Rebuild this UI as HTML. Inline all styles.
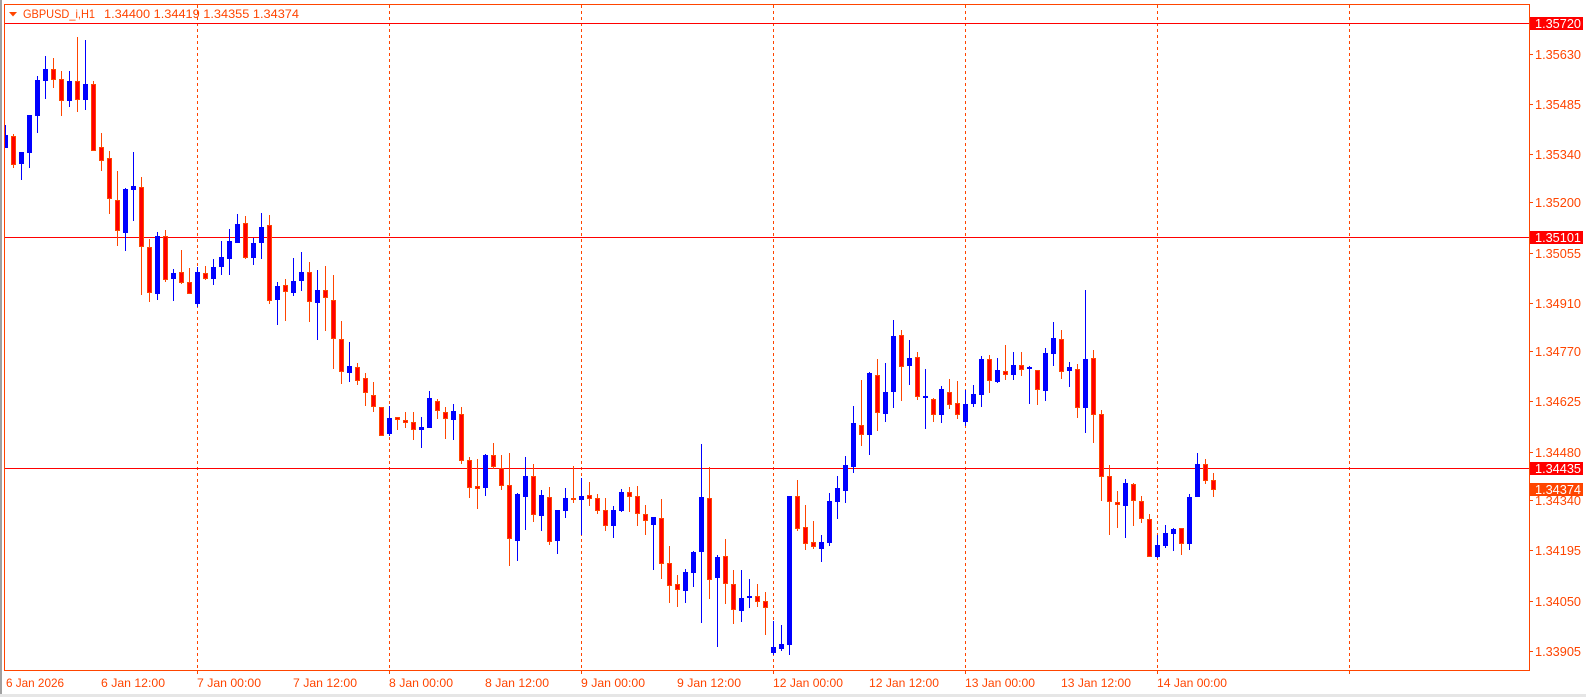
<!DOCTYPE html>
<html><head><meta charset="utf-8"><style>
html,body{margin:0;padding:0;background:#fff;width:1586px;height:697px;overflow:hidden}
svg{display:block}
text{font-family:"Liberation Sans",sans-serif}
</style></head><body>
<svg width="1586" height="697" viewBox="0 0 1586 697" xmlns="http://www.w3.org/2000/svg">
<rect x="0" y="0" width="2" height="697" fill="#a0a0a0"/>
<rect x="0" y="694" width="1586" height="3" fill="#e6e6e6"/>
<defs><clipPath id="pc"><rect x="5" y="5" width="1524" height="665"/></clipPath></defs>
<g stroke="#ff4500" stroke-width="1" stroke-dasharray="3,3">
<line x1="197.5" y1="5" x2="197.5" y2="676"/><line x1="389.5" y1="5" x2="389.5" y2="676"/>
<line x1="581.5" y1="5" x2="581.5" y2="676"/><line x1="773.5" y1="5" x2="773.5" y2="676"/>
<line x1="965.5" y1="5" x2="965.5" y2="676"/><line x1="1157.5" y1="5" x2="1157.5" y2="676"/>
<line x1="1349.5" y1="5" x2="1349.5" y2="676"/>
</g>
<g fill="#ff0000">
<rect x="4" y="23" width="1525" height="1"/>
<rect x="4" y="237" width="1525" height="1"/>
<rect x="4" y="468" width="1525" height="1"/>
</g>
<g clip-path="url(#pc)" id="c"></g>
<rect x="4.5" y="4.5" width="1525" height="666" fill="none" stroke="#ff4500" stroke-width="1"/>
<polygon points="9,12 17,12 13,16.5" fill="#ff4500"/>
<text x="23" y="18" font-size="12" fill="#ff4500" textLength="72" lengthAdjust="spacingAndGlyphs">GBPUSD_i,H1</text>
<text x="104" y="18" font-size="12" fill="#ff4500" textLength="195" lengthAdjust="spacingAndGlyphs">1.34400 1.34419 1.34355 1.34374</text>
<g fill="#ff4500">
<rect x="1529" y="54" width="4" height="1"/><rect x="1529" y="104" width="4" height="1"/>
<rect x="1529" y="154" width="4" height="1"/><rect x="1529" y="202" width="4" height="1"/>
<rect x="1529" y="253" width="4" height="1"/><rect x="1529" y="303" width="4" height="1"/>
<rect x="1529" y="351" width="4" height="1"/><rect x="1529" y="401" width="4" height="1"/>
<rect x="1529" y="452" width="4" height="1"/><rect x="1529" y="500" width="4" height="1"/>
<rect x="1529" y="550" width="4" height="1"/><rect x="1529" y="601" width="4" height="1"/>
<rect x="1529" y="651" width="4" height="1"/>
</g>
<g font-size="13" fill="#ff4500">
<text x="1535" y="59" textLength="46" lengthAdjust="spacingAndGlyphs">1.35630</text>
<text x="1535" y="109" textLength="46" lengthAdjust="spacingAndGlyphs">1.35485</text>
<text x="1535" y="159" textLength="46" lengthAdjust="spacingAndGlyphs">1.35340</text>
<text x="1535" y="207" textLength="46" lengthAdjust="spacingAndGlyphs">1.35200</text>
<text x="1535" y="258" textLength="46" lengthAdjust="spacingAndGlyphs">1.35055</text>
<text x="1535" y="308" textLength="46" lengthAdjust="spacingAndGlyphs">1.34910</text>
<text x="1535" y="356" textLength="46" lengthAdjust="spacingAndGlyphs">1.34770</text>
<text x="1535" y="406" textLength="46" lengthAdjust="spacingAndGlyphs">1.34625</text>
<text x="1535" y="457" textLength="46" lengthAdjust="spacingAndGlyphs">1.34480</text>
<text x="1535" y="505" textLength="46" lengthAdjust="spacingAndGlyphs">1.34340</text>
<text x="1535" y="555" textLength="46" lengthAdjust="spacingAndGlyphs">1.34195</text>
<text x="1535" y="606" textLength="46" lengthAdjust="spacingAndGlyphs">1.34050</text>
<text x="1535" y="656" textLength="46" lengthAdjust="spacingAndGlyphs">1.33905</text>
</g>
<rect x="1530" y="17" width="53" height="13" fill="#ff0000"/>
<rect x="1530" y="231" width="53" height="13" fill="#ff0000"/>
<rect x="1530" y="462" width="53" height="13" fill="#ff0000"/>
<rect x="1530" y="483" width="53" height="13" fill="#ff4500"/>
<g font-size="13" fill="#ffffff">
<text x="1535" y="28" textLength="46" lengthAdjust="spacingAndGlyphs">1.35720</text>
<text x="1535" y="242" textLength="46" lengthAdjust="spacingAndGlyphs">1.35101</text>
<text x="1535" y="473" textLength="46" lengthAdjust="spacingAndGlyphs">1.34435</text>
<text x="1535" y="494" textLength="46" lengthAdjust="spacingAndGlyphs">1.34374</text>
</g>
<g font-size="12" fill="#ff4500">
<text x="6" y="687" textLength="58" lengthAdjust="spacingAndGlyphs">6 Jan 2026</text>
<text x="101" y="687" textLength="64" lengthAdjust="spacingAndGlyphs">6 Jan 12:00</text>
<text x="197" y="687" textLength="64" lengthAdjust="spacingAndGlyphs">7 Jan 00:00</text>
<text x="293" y="687" textLength="64" lengthAdjust="spacingAndGlyphs">7 Jan 12:00</text>
<text x="389" y="687" textLength="64" lengthAdjust="spacingAndGlyphs">8 Jan 00:00</text>
<text x="485" y="687" textLength="64" lengthAdjust="spacingAndGlyphs">8 Jan 12:00</text>
<text x="581" y="687" textLength="64" lengthAdjust="spacingAndGlyphs">9 Jan 00:00</text>
<text x="677" y="687" textLength="64" lengthAdjust="spacingAndGlyphs">9 Jan 12:00</text>
<text x="773" y="687" textLength="70" lengthAdjust="spacingAndGlyphs">12 Jan 00:00</text>
<text x="869" y="687" textLength="70" lengthAdjust="spacingAndGlyphs">12 Jan 12:00</text>
<text x="965" y="687" textLength="70" lengthAdjust="spacingAndGlyphs">13 Jan 00:00</text>
<text x="1061" y="687" textLength="70" lengthAdjust="spacingAndGlyphs">13 Jan 12:00</text>
<text x="1157" y="687" textLength="70" lengthAdjust="spacingAndGlyphs">14 Jan 00:00</text>
</g>
</svg>
<script>
(function(){
var d="B 135 148 125 148|R 136 165 134 168|B 152 164 152 180|B 115 153 115 168|B 80 116 76 133|B 69 81 56 99|R 69 80 58 88|R 79 101 71 116|B 81 101 71 107|R 81 100 37 112|B 84 100 40 110|R 84 151 81 151|R 147 161 133 171|R 158 199 151 214|R 200 231 171 246|B 189 233 188 251|B 186 190 152 221|R 187 247 177 295|R 247 293 239 302|B 236 294 232 300|R 236 280 230 282|B 273 279 269 301|R 272 283 250 284|R 282 294 268 294|B 272 304 267 307|R 273 279 266 280|B 267 279 259 285|B 257 267 241 275|B 241 259 229 275|B 224 243 214 243|R 223 258 216 259|B 243 258 238 265|B 227 243 213 259|R 225 301 215 304|B 286 300 282 325|R 285 292 279 321|B 281 293 258 296|B 272 281 252 291|R 272 302 262 322|B 290 303 270 340|R 290 298 266 331|R 300 339 275 369|R 339 372 321 384|B 366 373 342 382|R 367 381 363 385|R 378 393 373 406|R 395 407 382 412|R 407 436 407 436|B 418 434 406 436|R 417 420 417 430|R 420 423 412 428|R 422 430 412 440|B 427 430 417 448|B 398 428 391 428|R 401 411 399 419|R 412 419 407 439|B 411 420 404 440|R 414 461 407 464|R 460 488 457 498|R 486 489 459 509|B 455 488 454 496|R 455 467 443 469|R 468 486 455 490|R 485 539 453 566|B 494 541 493 561|B 476 497 457 530|R 476 515 464 522|B 495 516 490 531|R 497 542 487 545|B 510 541 510 554|B 498 511 488 518|R 498 499 466 503|B 496 500 478 535|R 495 499 482 506|R 498 511 494 514|R 510 526 498 531|B 510 526 506 538|B 492 511 489 512|R 492 497 487 512|R 496 514 486 526|R 514 521 505 535|B 517 525 517 570|R 518 564 499 579|R 563 586 546 603|R 584 590 575 607|B 572 591 569 603|B 552 573 551 587|B 497 552 444 623|R 498 580 467 599|B 557 578 555 647|R 556 584 539 604|R 584 610 570 624|B 598 611 570 622|B 596 598 579 608|R 596 602 584 607|R 601 608 592 635|B 647 653 621 655|B 644 649 625 651|B 496 645 496 655|R 496 529 480 531|R 527 544 505 550|R 542 547 521 549|B 542 549 535 562|B 501 543 493 546|B 488 502 476 519|B 465 491 456 503|B 423 467 406 473|R 425 435 380 446|B 373 435 372 455|R 375 413 359 431|B 392 414 363 422|B 336 392 320 408|R 335 367 330 401|B 358 366 340 385|R 357 397 352 400|B 396 398 369 429|R 399 415 398 422|B 389 415 386 423|R 392 405 379 409|R 403 415 381 419|B 404 422 390 426|B 394 404 385 407|B 359 395 356 407|R 359 381 355 393|B 370 382 358 383|R 371 375 345 380|B 365 375 352 380|R 365 370 352 376|B 367 369 366 404|R 370 390 370 405|B 353 391 348 401|B 338 354 322 366|R 339 372 330 379|B 367 371 362 387|R 369 408 364 418|B 359 408 290 433|R 358 415 350 443|R 414 477 410 501|R 476 502 465 535|R 502 505 491 528|B 483 506 479 538|R 484 501 483 526|R 501 519 496 523|R 519 557 514 557|B 545 557 535 558|B 533 546 525 548|B 529 534 528 551|R 528 544 528 555|B 497 544 494 550|B 464 497 453 497|R 464 481 459 484|R 480 490 473 497".split("|");
var s="";
for(var i=0;i<d.length;i++){var p=d[i].split(" "),X=5+8*i,bt=+p[1],bb=+p[2],wt=+p[3],wb=+p[4];
if(p[0]=="B"){s+='<rect x="'+X+'" y="'+wt+'" width="1" height="'+Math.max(wb-wt,1)+'" fill="#0000ff"/><rect x="'+(X-2)+'" y="'+bt+'" width="5" height="'+Math.max(bb-bt,2)+'" fill="#0000ff"/>';}
else{s+='<rect x="'+X+'" y="'+wt+'" width="1" height="'+Math.max(wb-wt,1)+'" fill="#ff4500"/><rect x="'+(X-1.5)+'" y="'+(bt+0.5)+'" width="4" height="'+Math.max(bb-bt-1,1)+'" fill="#ff0000" stroke="#ff4500" stroke-width="1"/>';}}
var g=document.getElementById("c");g.innerHTML=s;
})();
</script>
</body></html>
